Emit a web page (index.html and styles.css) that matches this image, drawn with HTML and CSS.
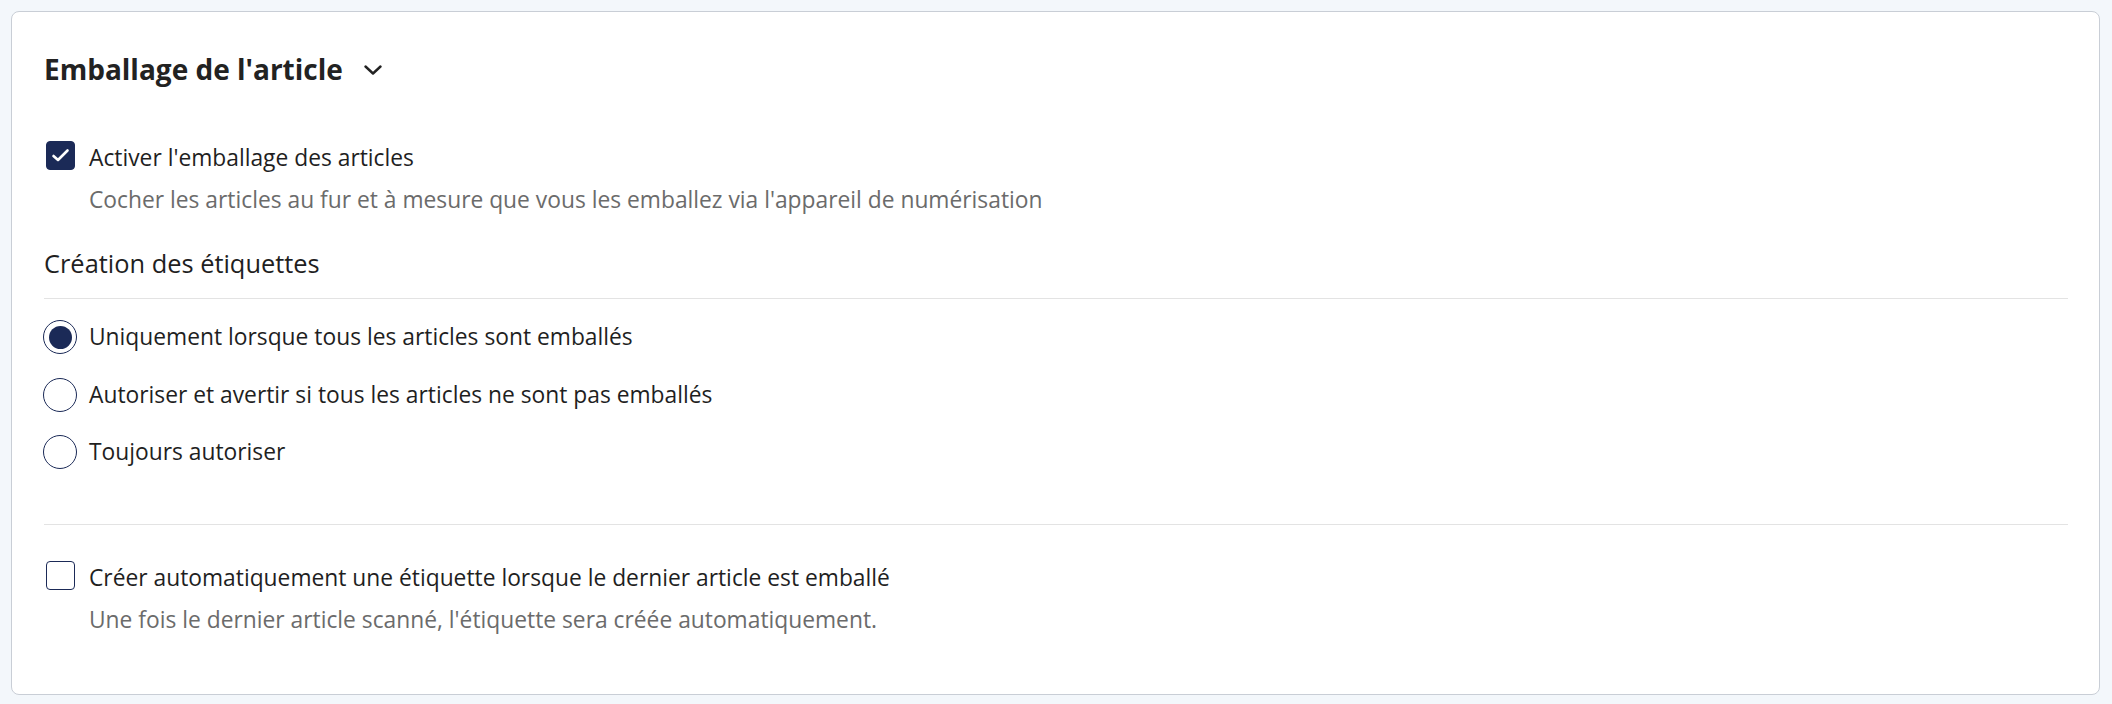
FILE: index.html
```html
<!DOCTYPE html>
<html lang="fr">
<head>
  <meta charset="UTF-8">
  <title>Emballage de l'article</title>
  <link rel="stylesheet" href="styles.css">
</head>
<body>
  <div class="card">
    <div class="card-header">
      <h2 class="card-title">Emballage de l'article</h2>
      <svg class="chevron" width="18" height="10" viewBox="0 0 18 10">
        <path d="M1.5 1.5 L9 8.5 L16.5 1.5" fill="none" stroke="#222" stroke-width="2.4" stroke-linecap="round" stroke-linejoin="round"/>
      </svg>
    </div>

    <!-- emballage -->
    <div class="option first">
      <span class="checkbox checked">
        <svg width="19" height="15" viewBox="0 0 19 15">
          <path d="M2.5 8 L7 12 L16.5 2.5" fill="none" stroke="#fff" stroke-width="2.6" stroke-linecap="round" stroke-linejoin="round"/>
        </svg>
      </span>
      <div class="option-text">
        <div class="option-label">Activer l'emballage des articles</div>
        <div class="option-help">Cocher les articles au fur et à mesure que vous les emballez via l'appareil de numérisation</div>
      </div>
    </div>

    <h3 class="section-title">Création des étiquettes</h3>

    <div class="radio-group">
      <div class="radio-row">
        <span class="radio checked"></span>
        <span class="radio-label">Uniquement lorsque tous les articles sont emballés</span>
      </div>
      <div class="radio-row">
        <span class="radio"></span>
        <span class="radio-label">Autoriser et avertir si tous les articles ne sont pas emballés</span>
      </div>
      <div class="radio-row">
        <span class="radio"></span>
        <span class="radio-label">Toujours autoriser</span>
      </div>
    </div>

    <hr class="divider">

    <!-- étiquette auto -->
    <div class="option last">
      <span class="checkbox"></span>
      <div class="option-text">
        <div class="option-label">Créer automatiquement une étiquette lorsque le dernier article est emballé</div>
        <div class="option-help">Une fois le dernier article scanné, l'étiquette sera créée automatiquement.</div>
      </div>
    </div>
  </div>
</body>
</html>
```

FILE: styles.css
```css
body {
  margin: 0;
  background-color: #f3f7fb;
  font-family: "Open Sans", "Noto Sans", sans-serif;
  color: #1f1f1f;
}
.card {
  margin: 11px 12px 11px 11px;
  background-color: #fff;
  border: 1px solid #c9ced6;
  border-radius: 8px;
  padding: 37px 31px 58.5px 32px;
}
.card-header {
  display: flex;
  align-items: center;
  height: 40px;
}
.card-title {
  margin: 0;
  font-size: 28px;
  font-weight: 700;
  line-height: 40px;
  color: #222;
}
.chevron {
  margin-left: 21px;
  margin-top: 2px;
}
.option {
  display: flex;
  align-items: flex-start;
}
.option.first {
  margin-top: 51px;
}
.option.last {
  margin-top: 35px;
}
.checkbox {
  flex: none;
  width: 29px;
  height: 29px;
  box-sizing: border-box;
  border: 1.5px solid #1b2a57;
  border-radius: 4px;
  margin: 1px 14px 0 2px;
  display: flex;
  align-items: center;
  justify-content: center;
}
.checkbox.checked {
  background-color: #1b2a57;
}
.option-text {
  display: flex;
  flex-direction: column;
  padding-top: 2px;
}
.option-label {
  font-size: 22.8px;
  line-height: 32px;
}
.option-help {
  font-size: 22.8px;
  line-height: 32px;
  margin-top: 9.5px;
  color: #6b6b6b;
}
.section-title {
  margin: 30.5px 0 0;
  padding-bottom: 18px;
  border-bottom: 1px solid #e3e3e3;
  font-size: 25.4px;
  font-weight: 400;
  line-height: 34px;
}
.radio-group {
  display: flex;
  flex-direction: column;
  gap: 23.5px;
  margin-top: 21px;
}
.radio-row {
  display: flex;
  align-items: center;
  height: 34px;
}
.radio {
  flex: none;
  width: 34px;
  height: 34px;
  box-sizing: border-box;
  border: 1.5px solid #1b2a57;
  border-radius: 50%;
  margin: 0 12px 0 -1px;
  display: flex;
  align-items: center;
  justify-content: center;
}
.radio.checked::after {
  content: "";
  width: 23px;
  height: 23px;
  border-radius: 50%;
  background-color: #1b2a57;
}
.radio-label {
  font-size: 22.8px;
  line-height: 32px;
}
.divider {
  margin: 55px 0 0;
  border: none;
  border-top: 1px solid #e3e3e3;
}
```
